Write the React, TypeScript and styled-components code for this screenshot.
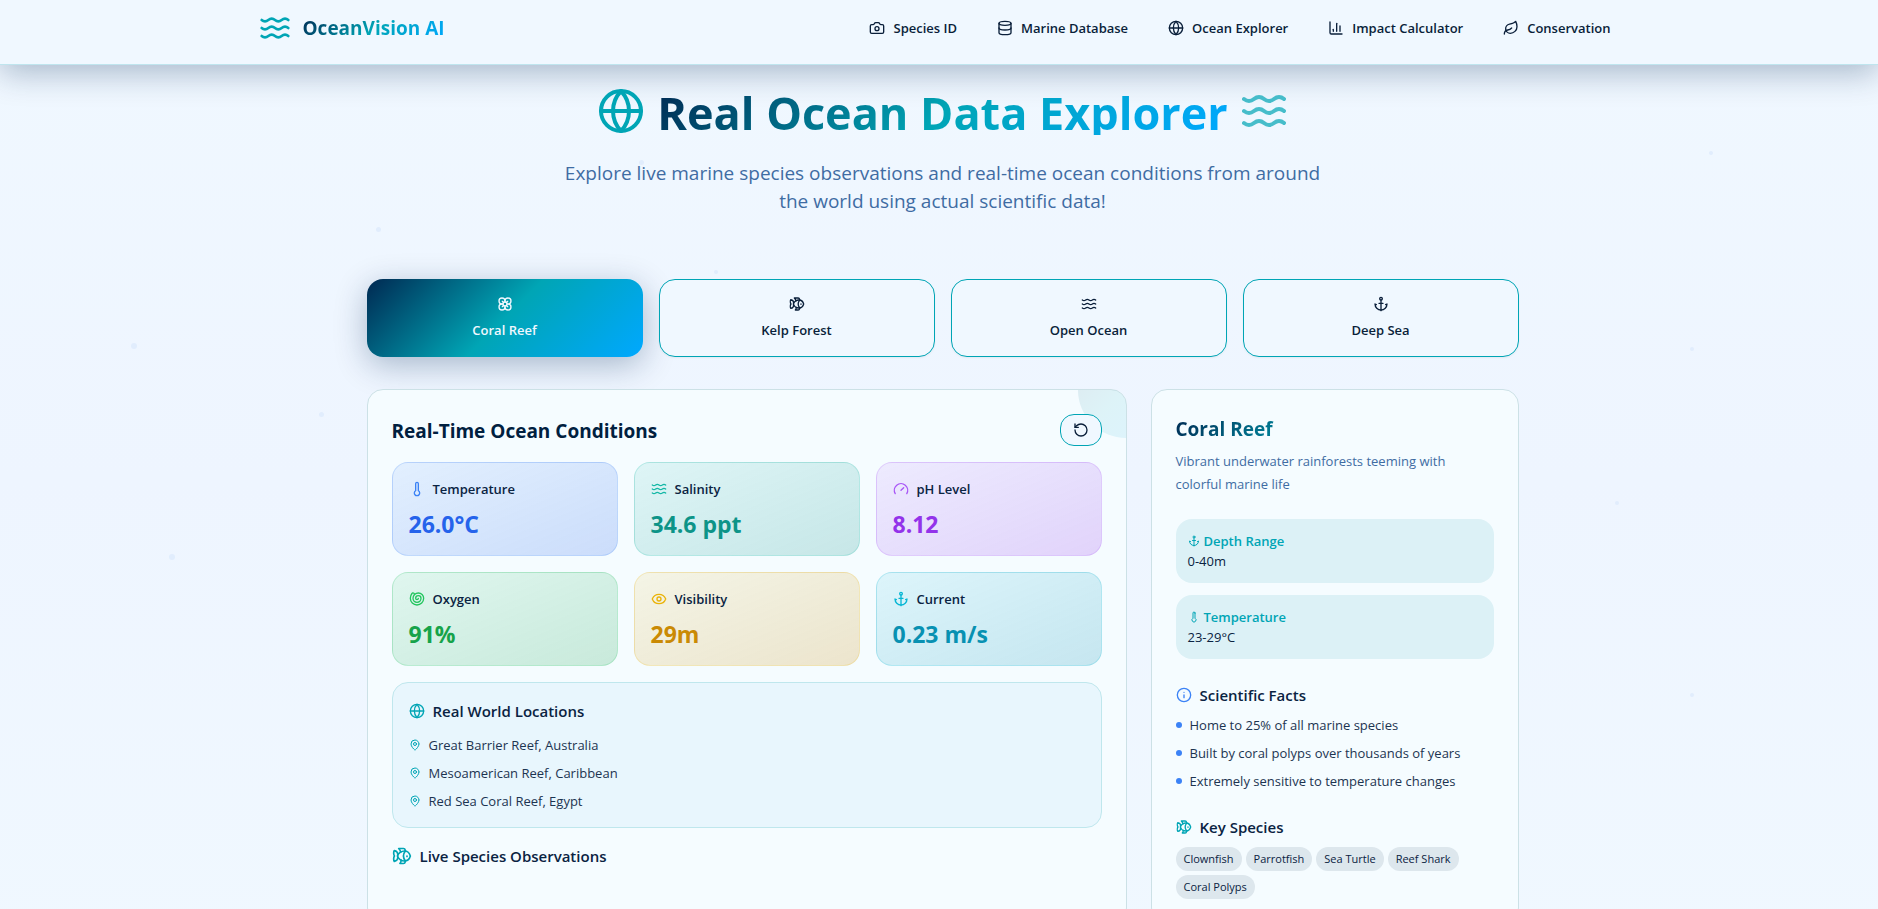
import React, { useState } from 'react';
import styled, { createGlobalStyle, css } from 'styled-components';
import {
  Anchor,
  Camera,
  ChartColumn,
  Database,
  Eye,
  Fish,
  Flower,
  Gauge,
  Globe,
  Info,
  Leaf,
  MapPin,
  RotateCcw,
  Shell,
  Thermometer,
  Waves,
  type LucideIcon,
} from 'lucide-react';

const GlobalStyle = createGlobalStyle`
  *, *::before, *::after { box-sizing: border-box; }
  body {
    margin: 0;
    overflow-x: hidden;
    background: #f0f8ff;
    color: #0a2342;
    font-family: 'Open Sans', 'Noto Sans', sans-serif;
    font-size: 13px;
    line-height: 20px;
  }
  h1, h2, h3, p, ul, dl, dd { margin: 0; padding: 0; }
  ul { list-style: none; }
  svg { flex-shrink: 0; }
`;

const teal = '#00a5b5';
const oceanGradient = `linear-gradient(135deg, #002952 0%, ${teal} 50%, #00a8ff 100%)`;

const gradientText = css`
  background: ${oceanGradient};
  background-clip: text;
  -webkit-background-clip: text;
  color: transparent;
`;

const Page = styled.div`
  position: relative;
  min-height: 100vh;
  background: linear-gradient(180deg, #f0f8ff 0%, #eef5ff 50%, #f0f8ff 100%);
`;

const Header = styled.header`
  position: relative;
  background: #f0f8ff;
  border-bottom: 1px solid #bfe5ee;
  box-shadow: 0 8px 32px rgba(0, 41, 82, 0.3);
  padding-left: 7px;
`;

const HeaderInner = styled.div`
  display: flex;
  align-items: center;
  justify-content: space-between;
  max-width: 1400px;
  margin: 0 auto;
  padding: 8px 16px 16px;
`;

const Brand = styled.a`
  display: flex;
  align-items: center;
  gap: 12px;
  height: 40px;
  color: ${teal};
  text-decoration: none;
`;

const BrandName = styled.span`
  ${gradientText}
  font-size: 19px;
  font-weight: 700;
  line-height: 28px;
`;

const Nav = styled.nav`
  display: flex;
  gap: 8px;
`;

const NavLink = styled.a`
  display: flex;
  align-items: center;
  gap: 8px;
  padding: 8px 16px;
  color: #0a1f3a;
  font-weight: 600;
  text-decoration: none;
`;

const Bubbles = styled.div`
  position: absolute;
  inset: 0;
  overflow: hidden;
  pointer-events: none;
`;

const Bubble = styled.i<{ $x: number; $y: number; $size: number }>`
  position: absolute;
  left: ${(p) => p.$x}%;
  top: ${(p) => p.$y}px;
  width: ${(p) => p.$size}px;
  height: ${(p) => p.$size}px;
  border-radius: 50%;
  background: #e1edfd;
`;

const Main = styled.main`
  position: relative;
  padding: 22px 0 32px 7px;
`;

const Content = styled.div`
  max-width: 1152px;
  margin: 0 auto;
`;

const Hero = styled.section`
  display: flex;
  flex-direction: column;
  align-items: center;
  gap: 24px;
  margin-bottom: 64px;
`;

const HeroRow = styled.div`
  display: flex;
  align-items: center;
  gap: 12px;
  color: ${teal};
`;

const HeroTitle = styled.h1`
  ${gradientText}
  height: 48px;
  font-size: 45px;
  font-weight: 700;
  line-height: 52px;
`;

const FadedWaves = styled(Waves)`
  opacity: 0.7;
`;

const Subtitle = styled.p`
  max-width: 768px;
  color: #3f6ca3;
  font-size: 19px;
  line-height: 28px;
  text-align: center;
`;

const Tabs = styled.div`
  display: grid;
  grid-template-columns: repeat(4, 1fr);
  gap: 16px;
  margin-bottom: 32px;
`;

const Tab = styled.button<{ $active: boolean }>`
  display: flex;
  flex-direction: column;
  align-items: center;
  gap: 8px;
  padding: 16px;
  border: 1px solid ${(p) => (p.$active ? 'transparent' : teal)};
  border-radius: 16px;
  background: ${(p) => (p.$active ? `${oceanGradient} border-box` : '#f0f8ff')};
  box-shadow: ${(p) =>
    p.$active ? '0 8px 32px rgba(0, 41, 82, 0.3)' : '0 1px 2px rgba(0, 0, 0, 0.05)'};
  color: ${(p) => (p.$active ? '#f0f8ff' : '#0a1f3a')};
  font: inherit;
  font-weight: 600;
  cursor: pointer;
`;

const Columns = styled.div`
  display: grid;
  grid-template-columns: repeat(3, 1fr);
  gap: 24px;
`;

const Panel = styled.section<{ $span?: number }>`
  position: relative;
  overflow: hidden;
  grid-column: span ${(p) => p.$span ?? 1};
  padding: 24px;
  border: 1px solid #cce1e6;
  border-radius: 16px;
  background: #f5fcff;
`;

const CornerGlow = styled.div`
  position: absolute;
  top: -48px;
  right: -48px;
  width: 96px;
  height: 96px;
  border-radius: 50%;
  background: ${oceanGradient};
  opacity: 0.1;
`;

const PanelHeader = styled.div`
  position: relative;
  display: flex;
  align-items: center;
  justify-content: space-between;
  margin-bottom: 16px;
`;

const PanelTitle = styled.h2`
  padding-top: 2px;
  color: #00203f;
  font-size: 19px;
  font-weight: 700;
  line-height: 28px;
`;

const RefreshButton = styled.button`
  display: flex;
  padding: 7px 12px;
  border: 1px solid ${teal};
  border-radius: 14px;
  background: #f0f8ff;
  color: #0a1f3a;
  cursor: pointer;
`;

const Metrics = styled.div`
  display: grid;
  grid-template-columns: repeat(3, 1fr);
  gap: 16px;
  margin-bottom: 16px;
`;

type Tone = { icon: string; text: string; rgb: string; end: string };

const tones: Record<string, Tone> = {
  blue: { icon: '#3b82f6', text: '#2563eb', rgb: '59, 130, 246', end: '37, 99, 235' },
  teal: { icon: '#14b8a6', text: '#0d9488', rgb: '20, 184, 166', end: '13, 148, 136' },
  purple: { icon: '#a855f7', text: '#9333ea', rgb: '168, 85, 247', end: '147, 51, 234' },
  green: { icon: '#22c55e', text: '#16a34a', rgb: '34, 197, 94', end: '22, 163, 74' },
  yellow: { icon: '#eab308', text: '#ca8a04', rgb: '234, 179, 8', end: '202, 138, 4' },
  cyan: { icon: '#06b6d4', text: '#0891b2', rgb: '6, 182, 212', end: '8, 145, 178' },
};

const MetricCard = styled.div<{ $tone: Tone }>`
  display: flex;
  flex-direction: column;
  gap: 8px;
  padding: 16px;
  border: 1px solid rgba(${(p) => p.$tone.rgb}, 0.2);
  border-radius: 16px;
  background: linear-gradient(
    to bottom right,
    rgba(${(p) => p.$tone.rgb}, 0.1),
    rgba(${(p) => p.$tone.end}, 0.2)
  );
  svg { color: ${(p) => p.$tone.icon}; }
`;

const MetricLabel = styled.h3`
  display: flex;
  align-items: center;
  gap: 8px;
  font-size: 13px;
  font-weight: 600;
  line-height: 20px;
`;

const MetricValue = styled.p<{ $tone: Tone }>`
  height: 32px;
  color: ${(p) => p.$tone.text};
  font-size: 23px;
  font-weight: 700;
  line-height: 34px;
`;

const Locations = styled.div`
  margin-bottom: 16px;
  padding: 16px;
  border: 1px solid #bfe7ed;
  border-radius: 16px;
  background: #e8f6fd;
`;

const SectionTitle = styled.h3<{ $color: string; $gap: number }>`
  display: flex;
  align-items: center;
  gap: 8px;
  margin-bottom: ${(p) => p.$gap}px;
  font-size: 15px;
  font-weight: 600;
  line-height: 24px;
  svg { color: ${(p) => p.$color}; }
`;

const List = styled.ul`
  display: flex;
  flex-direction: column;
  gap: 8px;
`;

const ListRow = styled.li`
  display: flex;
  align-items: center;
  gap: 8px;
  color: #1c3451;
  svg { color: ${teal}; }
`;

const Dot = styled.span`
  width: 6px;
  height: 6px;
  border-radius: 50%;
  background: #3b82f6;
`;

const HabitatTitle = styled.h2`
  ${gradientText}
  padding-top: 1px;
  margin-bottom: 7px;
  font-size: 19px;
  font-weight: 700;
  line-height: 28px;
`;

const Description = styled.p`
  margin-bottom: 23px;
  color: #3f6ca3;
  line-height: 23px;
`;

const Ranges = styled.dl`
  display: flex;
  flex-direction: column;
  gap: 12px;
  margin: 0 0 24px;
`;

const RangeBox = styled.div`
  padding: 12px;
  border-radius: 16px;
  background: #dcf1f6;
`;

const RangeLabel = styled.dt`
  display: flex;
  align-items: center;
  gap: 4px;
  color: ${teal};
  font-weight: 600;
`;

const Facts = styled.div`
  margin-bottom: 24px;
`;

const Tags = styled.ul`
  display: flex;
  flex-wrap: wrap;
  gap: 4px;
`;

const Tag = styled.li`
  padding: 4px 8px;
  border-radius: 12px;
  background: #dde7ed;
  font-size: 11px;
  line-height: 16px;
`;

const navItems: { icon: LucideIcon; label: string }[] = [
  { icon: Camera, label: 'Species ID' },
  { icon: Database, label: 'Marine Database' },
  { icon: Globe, label: 'Ocean Explorer' },
  { icon: ChartColumn, label: 'Impact Calculator' },
  { icon: Leaf, label: 'Conservation' },
];

const habitats: { icon: LucideIcon; label: string }[] = [
  { icon: Flower, label: 'Coral Reef' },
  { icon: Fish, label: 'Kelp Forest' },
  { icon: Waves, label: 'Open Ocean' },
  { icon: Anchor, label: 'Deep Sea' },
];

const metrics: { icon: LucideIcon; label: string; value: string; tone: string }[] = [
  { icon: Thermometer, label: 'Temperature', value: '26.0°C', tone: 'blue' },
  { icon: Waves, label: 'Salinity', value: '34.6 ppt', tone: 'teal' },
  { icon: Gauge, label: 'pH Level', value: '8.12', tone: 'purple' },
  { icon: Shell, label: 'Oxygen', value: '91%', tone: 'green' },
  { icon: Eye, label: 'Visibility', value: '29m', tone: 'yellow' },
  { icon: Anchor, label: 'Current', value: '0.23 m/s', tone: 'cyan' },
];

const locations = [
  'Great Barrier Reef, Australia',
  'Mesoamerican Reef, Caribbean',
  'Red Sea Coral Reef, Egypt',
];

const facts = [
  'Home to 25% of all marine species',
  'Built by coral polyps over thousands of years',
  'Extremely sensitive to temperature changes',
];

const species = ['Clownfish', 'Parrotfish', 'Sea Turtle', 'Reef Shark', 'Coral Polyps'];

const bubbles = [
  { x: 7, y: 343, size: 6 },
  { x: 20, y: 227, size: 5 },
  { x: 17, y: 412, size: 5 },
  { x: 9, y: 554, size: 6 },
  { x: 91, y: 151, size: 4 },
  { x: 90, y: 347, size: 4 },
  { x: 86, y: 501, size: 4 },
  { x: 90, y: 693, size: 4 },
  { x: 34, y: 160, size: 5 },
  { x: 38, y: 270, size: 4 },
];

export default function App() {
  const [active, setActive] = useState('Coral Reef');

  return (
    <Page>
      <GlobalStyle />
      <Bubbles aria-hidden="true">
        {bubbles.map((b) => (
          <Bubble key={`${b.x}-${b.y}`} $x={b.x} $y={b.y} $size={b.size} />
        ))}
      </Bubbles>

      <Header>
        <HeaderInner>
          <Brand href="#home">
            <Waves size={32} />
            <BrandName>OceanVision AI</BrandName>
          </Brand>
          <Nav>
            {navItems.map(({ icon: Icon, label }) => (
              <NavLink key={label} href="#">
                <Icon size={16} />
                {label}
              </NavLink>
            ))}
          </Nav>
        </HeaderInner>
      </Header>

      <Main>
        <Content>
          <Hero>
            <HeroRow>
              <Globe size={48} />
              <HeroTitle>Real Ocean Data Explorer</HeroTitle>
              <FadedWaves size={48} />
            </HeroRow>
            <Subtitle>
              Explore live marine species observations and real-time ocean conditions from around
              the world using actual scientific data!
            </Subtitle>
          </Hero>

          <Tabs>
            {habitats.map(({ icon: Icon, label }) => (
              <Tab
                key={label}
                type="button"
                $active={label === active}
                aria-pressed={label === active}
                onClick={() => setActive(label)}
              >
                <Icon size={16} />
                {label}
              </Tab>
            ))}
          </Tabs>

          <Columns>
            <Panel $span={2}>
              <CornerGlow />
              <PanelHeader>
                <PanelTitle>Real-Time Ocean Conditions</PanelTitle>
                <RefreshButton type="button" aria-label="Refresh">
                  <RotateCcw size={16} />
                </RefreshButton>
              </PanelHeader>

              <Metrics>
                {metrics.map(({ icon: Icon, label, value, tone }) => (
                  <MetricCard key={label} $tone={tones[tone]}>
                    <MetricLabel>
                      <Icon size={16} />
                      {label}
                    </MetricLabel>
                    <MetricValue $tone={tones[tone]}>{value}</MetricValue>
                  </MetricCard>
                ))}
              </Metrics>

              <Locations>
                <SectionTitle $color={teal} $gap={12}>
                  <Globe size={16} />
                  Real World Locations
                </SectionTitle>
                <List>
                  {locations.map((place) => (
                    <ListRow key={place}>
                      <MapPin size={12} />
                      {place}
                    </ListRow>
                  ))}
                </List>
              </Locations>

              <SectionTitle $color={teal} $gap={12}>
                <Fish size={20} />
                Live Species Observations
              </SectionTitle>
            </Panel>

            <Panel>
              <HabitatTitle>Coral Reef</HabitatTitle>
              <Description>
                Vibrant underwater rainforests teeming with colorful marine life
              </Description>

              <Ranges>
                <RangeBox>
                  <RangeLabel>
                    <Anchor size={12} />
                    Depth Range
                  </RangeLabel>
                  <dd>0-40m</dd>
                </RangeBox>
                <RangeBox>
                  <RangeLabel>
                    <Thermometer size={12} />
                    Temperature
                  </RangeLabel>
                  <dd>23-29°C</dd>
                </RangeBox>
              </Ranges>

              <Facts>
                <SectionTitle $color="#3b82f6" $gap={8}>
                  <Info size={16} />
                  Scientific Facts
                </SectionTitle>
                <List>
                  {facts.map((fact) => (
                    <ListRow key={fact}>
                      <Dot />
                      {fact}
                    </ListRow>
                  ))}
                </List>
              </Facts>

              <SectionTitle $color={teal} $gap={8}>
                <Fish size={16} />
                Key Species
              </SectionTitle>
              <Tags>
                {species.map((name) => (
                  <Tag key={name}>{name}</Tag>
                ))}
              </Tags>
            </Panel>
          </Columns>
        </Content>
      </Main>
    </Page>
  );
}
